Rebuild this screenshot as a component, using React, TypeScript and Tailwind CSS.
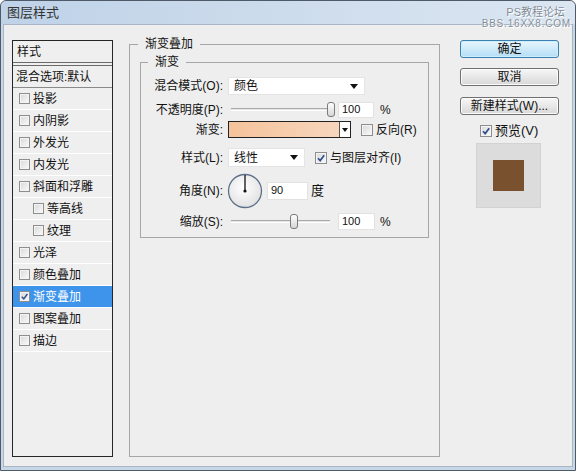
import React from "react";

const layers = [
  { label: "投影" },
  { label: "内阴影" },
  { label: "外发光" },
  { label: "内发光" },
  { label: "斜面和浮雕" },
  { label: "等高线", sub: true },
  { label: "纹理", sub: true },
  { label: "光泽" },
  { label: "颜色叠加" },
  { label: "渐变叠加", active: true },
  { label: "图案叠加" },
  { label: "描边" },
];

const Check = ({ checked, size = "sm" }: { checked?: boolean; size?: "sm" | "md" }) => (
  <span
    className={
      (size === "sm" ? "w-[11px] h-[11px]" : "w-[12px] h-[12px]") +
      " shrink-0 flex items-center justify-center border border-[#8e8e8e] bg-gradient-to-br from-[#d8d8d8] to-[#fbfbfb] shadow-[inset_0_0_0_1px_#f4f4f4]"
    }
  >
    {checked && (
      <svg viewBox="0 0 10 10" className="w-full h-full">
        <path d="M2 5.2 L4.2 7.6 L8.2 2.2" fill="none" stroke="#2f4f8f" strokeWidth="1.7" />
      </svg>
    )}
  </span>
);

const Arrow = () => (
  <svg width="8" height="5" viewBox="0 0 8 5" className="shrink-0">
    <path d="M0 0 H8 L4 5 Z" fill="#111" />
  </svg>
);

const Select = ({ value, width }: { value: string; width: string }) => (
  <div className={width + " h-full flex items-center justify-between bg-white border border-[#e4e4e4] pl-[5px] pr-[6px]"}>
    <span>{value}</span>
    <Arrow />
  </div>
);

const Slider = ({ pos }: { pos: number }) => (
  <div className="relative ml-[3px] w-[104px] h-full flex items-center">
    <div className="w-[99px] h-[3px] border-t border-[#a9a9a9] border-b border-b-white bg-[#e6e6e6]" />
    <div
      className="absolute top-[1px] w-[8px] h-[15px] rounded-[3px] border border-[#7b7b7b] bg-gradient-to-b from-white to-[#d6d6d6]"
      style={{ left: pos }}
    />
  </div>
);

const Field = ({ value, width }: { value: string; width: string }) => (
  <div className={width + " h-full flex items-center bg-white border border-[#e2e2e2] pl-[3px] text-[11px]"}>
    {value}
  </div>
);

const Row = ({ label, h, mt, children }: { label: string; h: string; mt: string; children: React.ReactNode }) => (
  <div className={"flex items-center " + h + " " + mt}>
    <div className="w-[82px] text-right mr-[5px] whitespace-nowrap">{label}</div>
    {children}
  </div>
);

const Dial = () => (
  <svg width="36" height="36" viewBox="0 0 36 36" className="shrink-0 -ml-[1px]">
    <defs>
      <radialGradient id="dg" cx="45%" cy="40%" r="60%">
        <stop offset="0%" stopColor="#ffffff" />
        <stop offset="100%" stopColor="#e2e2e2" />
      </radialGradient>
    </defs>
    <circle cx="18" cy="18" r="16.5" fill="url(#dg)" stroke="#5d7088" strokeWidth="1.3" />
    <line x1="18" y1="18" x2="18" y2="2" stroke="#111" strokeWidth="1.3" />
    <circle cx="18" cy="18" r="1.6" fill="#111" />
  </svg>
);

const Button = ({ children, primary }: { children: React.ReactNode; primary?: boolean }) => (
  <button
    className={
      "w-[99px] h-[18px] rounded-[3px] border text-[12px] leading-none flex items-center justify-center " +
      (primary
        ? "border-[#3c7fb1] bg-gradient-to-b from-[#e8f6fd] to-[#b4def5] shadow-[inset_0_0_0_1px_#cdeefc]"
        : "border-[#707070] bg-gradient-to-b from-[#f7f7f7] to-[#d8d8d8] shadow-[inset_0_0_0_1px_#fbfbfb]")
    }
  >
    {children}
  </button>
);

export default function App() {
  return (
    <div className="w-[576px] h-[471px] flex flex-col border border-[#4e5a68] rounded-t-[6px] bg-[#c8d7e7] text-[12px] text-[#111] font-['Liberation_Sans','Noto_Sans_CJK_SC',sans-serif] overflow-hidden">
      {/* title bar */}
      <div className="relative z-10 h-[23px] shrink-0 flex items-start justify-between bg-gradient-to-r from-[#bfd2e8] via-[#cddcec] to-[#dbe6f2] rounded-t-[5px]">
        <div className="pl-[6px] pt-[4px] text-[13px] leading-[15px] text-[#333]">图层样式</div>
        <div className="pr-[4px] pt-[6px] flex flex-col items-end text-[#7f8b97] [text-shadow:0_0_1px_#fff,1px_1px_0_#fff]">
          <span className="text-[11px] leading-[11px] mr-[6px]">PS教程论坛</span>
          <span className="text-[10px] leading-[11px] tracking-[0.8px]">BBS.16XX8.COM</span>
        </div>
      </div>

      {/* content */}
      <div className="flex-1 mx-[2px] mb-[3px] bg-[#eeeeee] border border-[#a8b5c4] flex items-start pl-[8px] pt-[15px]">
        {/* style list */}
        <div className="w-[101px] h-[417px] border border-[#262626] bg-[#efefef] flex flex-col">
          <div className="h-[25px] shrink-0 flex items-center pl-[4px] border-b-[4px] border-double border-[#6a6a6a]">样式</div>
          <div className="h-[22px] shrink-0 flex items-center pl-[3px] border-b border-[#8a8a8a] whitespace-nowrap">混合选项:默认</div>
          {layers.map((l) => (
            <div
              key={l.label}
              className={
                "h-[22px] shrink-0 flex items-center gap-[3px] border-b border-white " +
                (l.sub ? "pl-[20px] " : "pl-[6px] ") +
                (l.active ? "bg-[#3d94ea] text-white" : "")
              }
            >
              <Check checked={l.active} />
              <span>{l.label}</span>
            </div>
          ))}
        </div>

        {/* gradient overlay group */}
        <fieldset className="ml-[16px] -mt-[4px] w-[311px] h-[421px] border border-[#a6a6a6] px-0">
          <legend className="ml-[8px] px-[7px] leading-[16px]">渐变叠加</legend>
          <fieldset className="mx-[10px] mt-[2px] border border-[#a6a6a6] pb-[7px]">
            <legend className="ml-[7px] px-[7px] leading-[16px]">渐变</legend>
            <Row label="混合模式(O):" h="h-[18px]" mt="mt-[7px]">
              <Select value="颜色" width="w-[137px]" />
            </Row>
            <Row label="不透明度(P):" h="h-[17px]" mt="mt-[6px]">
              <Slider pos={96} />
              <div className="ml-[3px] h-[16px] flex">
                <Field value="100" width="w-[36px]" />
              </div>
              <span className="ml-[6px]">%</span>
            </Row>
            <Row label="渐变:" h="h-[17px]" mt="mt-[3px]">
              <div className="flex h-full border border-[#222]">
                <div className="w-[110px] h-full bg-gradient-to-r from-[#f5c39b] to-[#f7d6bd]" />
                <div className="w-[11px] h-full border-l border-[#555] bg-white flex items-center justify-center">
                  <svg width="6" height="4" viewBox="0 0 6 4">
                    <path d="M0 0 H6 L3 4 Z" fill="#111" />
                  </svg>
                </div>
              </div>
              <span className="ml-[10px]">
                <Check size="md" />
              </span>
              <span className="ml-[3px]">反向(R)</span>
            </Row>
            <Row label="样式(L):" h="h-[19px]" mt="mt-[10px]">
              <Select value="线性" width="w-[77px]" />
              <span className="ml-[10px]">
                <Check size="md" checked />
              </span>
              <span className="ml-[3px] whitespace-nowrap">与图层对齐(I)</span>
            </Row>
            <Row label="角度(N):" h="h-[35px]" mt="mt-[6px]">
              <Dial />
              <div className="ml-[4px] h-[18px] flex">
                <Field value="90" width="w-[41px]" />
              </div>
              <span className="ml-[3px] text-[13px]">度</span>
            </Row>
            <Row label="缩放(S):" h="h-[17px]" mt="mt-[5px]">
              <Slider pos={59} />
              <div className="ml-[3px] h-[17px] flex">
                <Field value="100" width="w-[37px]" />
              </div>
              <span className="ml-[5px]">%</span>
            </Row>
          </fieldset>
        </fieldset>

        {/* buttons */}
        <div className="ml-[20px] w-[99px] flex flex-col">
          <Button primary>确定</Button>
          <div className="mt-[10px]">
            <Button>取消</Button>
          </div>
          <div className="mt-[11px]">
            <Button>新建样式(W)...</Button>
          </div>
          <div className="mt-[9px] h-[13px] pl-[20px] flex items-center gap-[3px]">
            <Check size="md" checked />
            <span className="text-[13px] leading-none">预览(V)</span>
          </div>
          <div className="mt-[6px] ml-[16px] w-[65px] h-[65px] bg-[#dcdcdc] border border-[#d2d2d2] flex items-center justify-center">
            <div className="w-[31px] h-[31px] bg-[#7a512f]" />
          </div>
        </div>
      </div>
    </div>
  );
}
